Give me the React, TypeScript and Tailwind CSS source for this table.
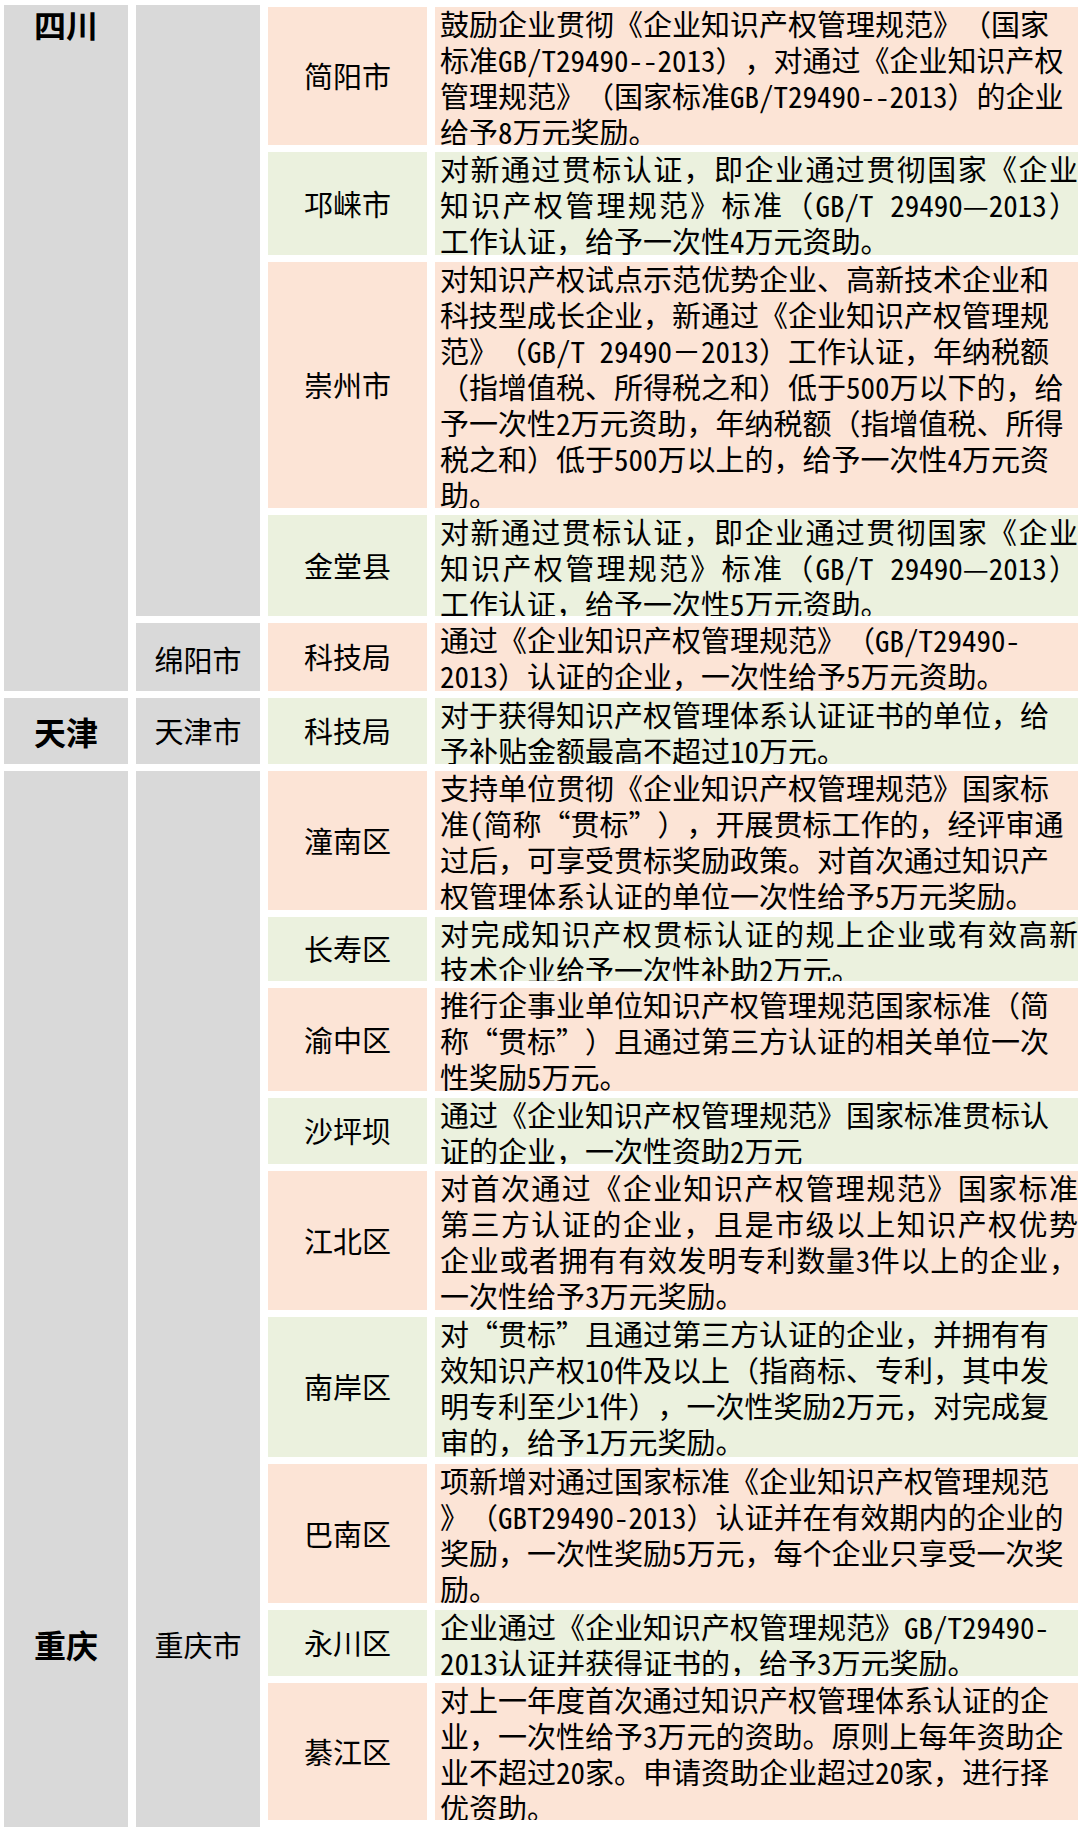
import React from 'react'

interface Row {
    district: string
    lines: string[]
    spread?: boolean
}

const rows: Row[] = [
    {
        district: '简阳市',
        lines: [
            '鼓励企业贯彻《企业知识产权管理规范》（国家',
            '标准GB/T29490--2013），对通过《企业知识产权',
            '管理规范》（国家标准GB/T29490--2013）的企业',
            '给予8万元奖励。',
        ],
    },
    {
        district: '邛崃市',
        spread: true,
        lines: [
            '对新通过贯标认证，即企业通过贯彻国家《企业',
            '知识产权管理规范》标准（GB/T 29490—2013）',
            '工作认证，给予一次性4万元资助。',
        ],
    },
    {
        district: '崇州市',
        lines: [
            '对知识产权试点示范优势企业、高新技术企业和',
            '科技型成长企业，新通过《企业知识产权管理规',
            '范》（GB/T 29490－2013）工作认证，年纳税额',
            '（指增值税、所得税之和）低于500万以下的，给',
            '予一次性2万元资助，年纳税额（指增值税、所得',
            '税之和）低于500万以上的，给予一次性4万元资',
            '助。',
        ],
    },
    {
        district: '金堂县',
        spread: true,
        lines: [
            '对新通过贯标认证，即企业通过贯彻国家《企业',
            '知识产权管理规范》标准（GB/T 29490—2013）',
            '工作认证，给予一次性5万元资助。',
        ],
    },
    {
        district: '科技局',
        lines: [
            '通过《企业知识产权管理规范》（GB/T29490-',
            '2013）认证的企业，一次性给予5万元资助。',
        ],
    },
    {
        district: '科技局',
        lines: [
            '对于获得知识产权管理体系认证证书的单位，给',
            '予补贴金额最高不超过10万元。',
        ],
    },
    {
        district: '潼南区',
        lines: [
            '支持单位贯彻《企业知识产权管理规范》国家标',
            '准(简称“贯标”），开展贯标工作的，经评审通',
            '过后，可享受贯标奖励政策。对首次通过知识产',
            '权管理体系认证的单位一次性给予5万元奖励。',
        ],
    },
    {
        district: '长寿区',
        spread: true,
        lines: [
            '对完成知识产权贯标认证的规上企业或有效高新',
            '技术企业给予一次性补助2万元。',
        ],
    },
    {
        district: '渝中区',
        lines: [
            '推行企事业单位知识产权管理规范国家标准（简',
            '称“贯标”）且通过第三方认证的相关单位一次',
            '性奖励5万元。',
        ],
    },
    {
        district: '沙坪坝',
        lines: [
            '通过《企业知识产权管理规范》国家标准贯标认',
            '证的企业，一次性资助2万元',
        ],
    },
    {
        district: '江北区',
        spread: true,
        lines: [
            '对首次通过《企业知识产权管理规范》国家标准',
            '第三方认证的企业，且是市级以上知识产权优势',
            '企业或者拥有有效发明专利数量3件以上的企业，',
            '一次性给予3万元奖励。',
        ],
    },
    {
        district: '南岸区',
        lines: [
            '对“贯标”且通过第三方认证的企业，并拥有有',
            '效知识产权10件及以上（指商标、专利，其中发',
            '明专利至少1件），一次性奖励2万元，对完成复',
            '审的，给予1万元奖励。',
        ],
    },
    {
        district: '巴南区',
        lines: [
            '项新增对通过国家标准《企业知识产权管理规范',
            '》（GBT29490-2013）认证并在有效期内的企业的',
            '奖励，一次性奖励5万元，每个企业只享受一次奖',
            '励。',
        ],
    },
    {
        district: '永川区',
        lines: [
            '企业通过《企业知识产权管理规范》GB/T29490-',
            '2013认证并获得证书的，给予3万元奖励。',
        ],
    },
    {
        district: '綦江区',
        lines: [
            '对上一年度首次通过知识产权管理体系认证的企',
            '业，一次性给予3万元的资助。原则上每年资助企',
            '业不超过20家。申请资助企业超过20家，进行择',
            '优资助。',
        ],
    },
]

function PolicyCells({ row, index }: { row: Row; index: number }) {
    const bg = index % 2 === 0 ? 'bg-[#fce4d6]' : 'bg-[#ebf1de]'

    return (
        <>
            {/* 区县 */}
            <div className={`col-start-3 flex items-center justify-center ${bg}`}>
                {row.district}
            </div>

            {/* 政策内容 */}
            <div className={`col-start-4 overflow-hidden pl-[5px] leading-[36px] ${bg}`}>
                <div className="-mt-[2px]">
                    {row.lines.map((line, i) => {
                        const justify = row.spread && i < row.lines.length - 1
                        return (
                            <div
                                key={i}
                                className={justify ? 'text-justify [text-align-last:justify]' : 'whitespace-nowrap'}
                            >
                                {line}
                            </div>
                        )
                    })}
                </div>
            </div>
        </>
    )
}

export default function App() {
    return (
        <div className="min-h-[1830px] bg-white font-['Noto_Sans_Mono_CJK_SC','Noto_Sans_CJK_SC',sans-serif] text-[29px] text-black [text-autospace:no-autospace] [text-spacing-trim:space-all]">
            <div className="grid grid-cols-[124px_124px_159px_643px] grid-rows-[138px_103px_246px_101px_68px_66px_139px_64px_103px_66px_139px_140px_139px_66px_137px] gap-x-2 gap-y-[7px] pl-1 pt-[7px]">
                {/* 四川 */}
                <div className="col-start-1 row-span-5 -mt-[2px] bg-[#d9d9d9] pt-[3px] text-center text-[32px] font-bold leading-[32px]">
                    四川
                </div>
                <div className="col-start-2 row-span-4 -mt-[2px] bg-[#d9d9d9]" />
                {rows.slice(0, 4).map((row, i) => (
                    <PolicyCells key={i} row={row} index={i} />
                ))}
                <div className="col-start-2 flex items-center justify-center bg-[#d9d9d9] pt-[6px]">绵阳市</div>
                <PolicyCells row={rows[4]} index={4} />

                {/* 天津 */}
                <div className="col-start-1 flex items-center justify-center bg-[#d9d9d9] text-[32px] font-bold">
                    天津
                </div>
                <div className="col-start-2 flex items-center justify-center bg-[#d9d9d9]">天津市</div>
                <PolicyCells row={rows[5]} index={5} />

                {/* 重庆 */}
                <div className="col-start-1 row-span-9 -mb-[7px] bg-[#d9d9d9] pt-[857px] text-center text-[32px] font-bold leading-[32px]">
                    重庆
                </div>
                <div className="col-start-2 row-span-9 -mb-[7px] bg-[#d9d9d9] pt-[857px] text-center leading-[32px]">
                    重庆市
                </div>
                {rows.slice(6).map((row, i) => (
                    <PolicyCells key={i + 6} row={row} index={i + 6} />
                ))}
            </div>
        </div>
    )
}
